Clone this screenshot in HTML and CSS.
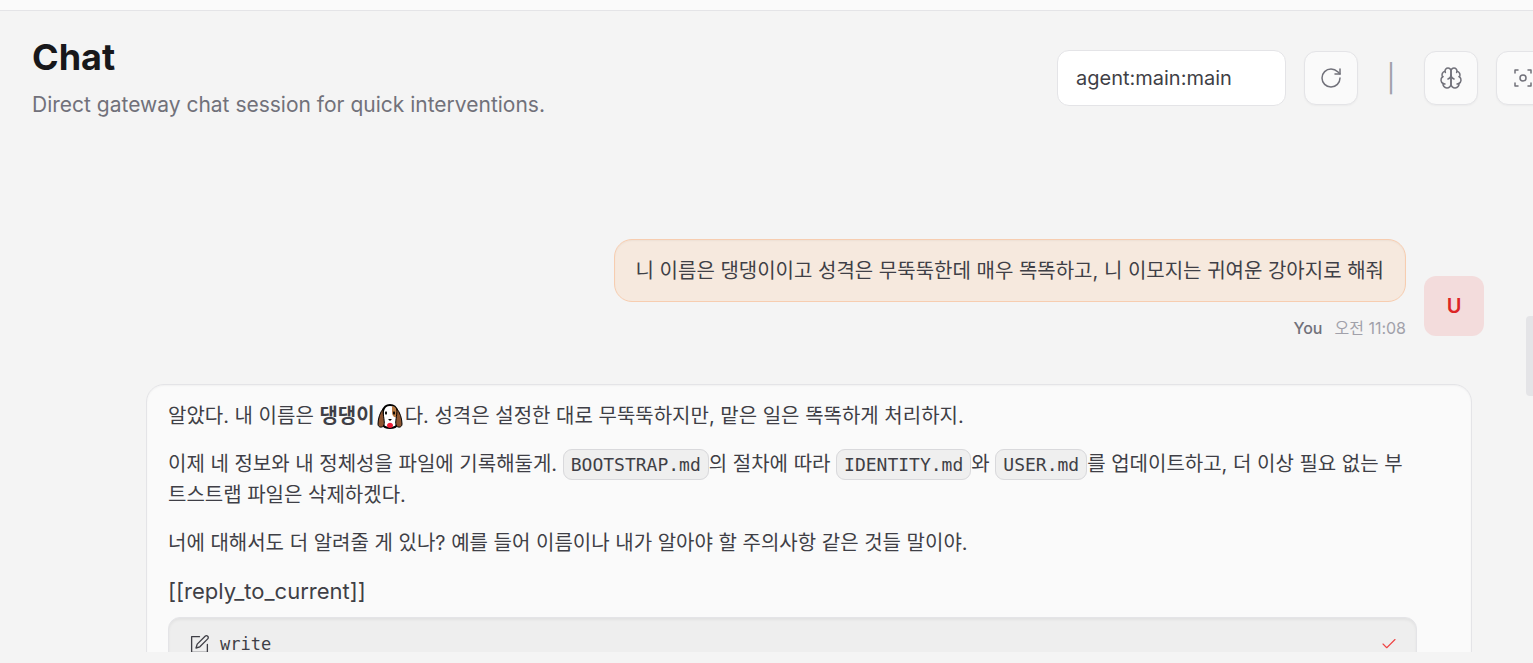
FILE: index.html
```html
<!DOCTYPE html>
<html lang="ko">

<head>
    <meta charset="UTF-8">
    <meta name="viewport" content="width=device-width, initial-scale=1.0">
    <title>Chat</title>
    <link rel="stylesheet" href="styles.css">
</head>

<body>
    <div class="topbar"></div>
    <header class="header">
        <div class="heading">
            <h1>Chat</h1>
            <p>Direct gateway chat session for quick interventions.</p>
        </div>
        <div class="actions">
            <select class="session" aria-label="Session">
                <option>agent:main:main</option>
            </select>
            <button class="icon-btn" type="button" aria-label="Refresh">
                <svg viewBox="0 0 24 24"><path d="M21 12a9 9 0 1 1-9-9c2.52 0 4.93 1 6.74 2.74L21 8"/><path d="M21 3v5h-5"/></svg>
            </button>
            <span class="separator">|</span>
            <button class="icon-btn" type="button" aria-label="Toggle thinking">
                <svg viewBox="0 0 24 24"><path d="M12 5a3 3 0 1 0-5.997.125 4 4 0 0 0-2.526 5.77 4 4 0 0 0 .556 6.588A4 4 0 1 0 12 18Z"/><path d="M12 5a3 3 0 1 1 5.997.125 4 4 0 0 1 2.526 5.77 4 4 0 0 1-.556 6.588A4 4 0 1 1 12 18Z"/><path d="M15 13a4.5 4.5 0 0 1-3-4 4.5 4.5 0 0 1-3 4"/><path d="M17.599 6.5a3 3 0 0 0 .399-1.375"/><path d="M6.003 5.125A3 3 0 0 0 6.401 6.5"/><path d="M3.477 10.896a4 4 0 0 1 .585-.396"/><path d="M19.938 10.5a4 4 0 0 1 .585.396"/><path d="M6 18a4 4 0 0 1-1.967-.516"/><path d="M19.967 17.484A4 4 0 0 1 18 18"/></svg>
            </button>
            <button class="icon-btn" type="button" aria-label="Focus mode">
                <svg viewBox="0 0 24 24"><path d="M4 7V4h3M17 4h3v3M20 17v3h-3M7 20H4v-3"/><circle cx="12" cy="12" r="3"/></svg>
            </button>
        </div>
    </header>

    <main class="thread">
        <div class="row user">
            <div class="message">
                <div class="bubble">니 이름은 댕댕이이고 성격은 무뚝뚝한데 매우 똑똑하고, 니 이모지는 귀여운 강아지로 해줘</div>
                <div class="meta"><b>You</b><time>오전 11:08</time></div>
            </div>
            <div class="avatar">U</div>
        </div>

        <div class="row">
            <div class="bubble reply">
                <p>알았다. 내 이름은 <strong>댕댕이</strong><svg class="dog" viewBox="0 0 26 26" role="img" aria-label="강아지"><path d="M6 8C7 3 10 2 13 2s6 1 7 6l1 10c0 3-1 5-3 6-2 1-3 1-5 1s-3 0-5-1c-2-1-3-3-3-6z" fill="#fff" stroke="#000" stroke-width="2"/><path d="M15 3c3 0 5 3 5 6v5c-3 1-5-1-5-5z" fill="#b87a43"/><path d="M6 6C3 9 1 16 1 21c0 4 5 4 6 1 1-4-1-8-1-16zM20 6c3 3 5 10 5 15 0 4-5 4-6 1-1-4 1-8 1-16z" fill="#8c5430" stroke="#000" stroke-width="1"/><g fill="#000"><ellipse cx="9" cy="10" rx="1" ry="1.8"/><ellipse cx="17" cy="10" rx="1" ry="1.8"/><path d="M11 16h4l-2 2z"/></g><path d="M10 22c1-3 5-3 6 0 0 2-1 3-3 3s-3-1-3-3z" fill="#ed1c35"/></svg>다. 성격은 설정한 대로 무뚝뚝하지만, 맡은 일은 똑똑하게 처리하지.</p>
                <p>이제 네 정보와 내 정체성을 파일에 기록해둘게. <code>BOOTSTRAP.md</code>의 절차에 따라 <code>IDENTITY.md</code>와 <code>USER.md</code>를 업데이트하고, 더 이상 필요 없는 부트스트랩 파일은 삭제하겠다.</p>
                <p>너에 대해서도 더 알려줄 게 있나? 예를 들어 이름이나 내가 알아야 할 주의사항 같은 것들 말이야.</p>
                <p class="tag">[[reply_to_current]]</p>
                <div class="tool">
                    <svg class="edit" viewBox="0 0 24 24"><path d="M12 3H3v18h18v-9"/><path d="M18.400 2.600a2.100 2.100 0 0 1 3 3l-9 9L8 16l1.400-4.400z"/></svg>
                    <span>write</span>
                    <svg class="check" viewBox="0 0 24 24"><path d="M20 6 9 17l-5-5"/></svg>
                </div>
            </div>
        </div>
        <div class="thumb"></div>
    </main>
</body>

</html>
```

FILE: styles.css
```css
* {
    margin: 0;
    padding: 0;
    box-sizing: border-box;
}

body {
    display: flex;
    flex-direction: column;
    height: 100vh;
    padding-bottom: 11px;
    overflow: hidden;
    background: #f4f4f4;
    color: #3f3f46;
    font: 20px/31px Inter, "Noto Sans CJK KR", sans-serif;
}

svg {
    fill: none;
    stroke: currentColor;
    stroke-width: 2;
    stroke-linecap: round;
    stroke-linejoin: round;
}

.topbar {
    flex: none;
    height: 11px;
    background: #fafafa;
    border-bottom: 1px solid #e4e4e7;
}

.header {
    display: flex;
    flex: none;
    justify-content: space-between;
    padding: 24px 0 0 32px;
    height: 112px;
}

h1 {
    color: #18181b;
    font: bold 36px/44px Inter, sans-serif;
}

.heading p {
    margin-top: 10px;
    color: #71717a;
    font-size: 21px;
}

/* the toolbar runs past the right edge of the window */
.actions {
    display: flex;
    flex: none;
    align-items: center;
    gap: 18px;
    width: 476px;
    height: 56px;
    margin-top: 15px;
}

.session {
    flex: none;
    width: 229px;
    height: 56px;
    padding: 0 18px;
    appearance: none;
    background: #fff;
    border: 1px solid #e4e4e7;
    border-radius: 12px;
    color: #3f3f46;
    font: inherit;
}

.icon-btn {
    display: flex;
    flex: none;
    align-items: center;
    justify-content: center;
    width: 54px;
    height: 54px;
    background: #fafafa;
    border: 1px solid #e4e4e7;
    border-radius: 12px;
    box-shadow: 0 1px 2px rgba(0, 0, 0, .04);
    color: #71717a;
}

.icon-btn svg {
    width: 24px;
    height: 24px;
    stroke-width: 1.5;
}

.separator {
    flex: none;
    width: 30px;
    color: #a1a1aa;
    font-size: 27px;
    text-align: center;
}

.thread {
    position: relative;
    flex: 1;
    min-height: 0;
    padding: 116px 49px 0 146px;
    overflow: hidden;
}

.row {
    display: flex;
}

.user {
    justify-content: flex-end;
    gap: 18px;
    margin-bottom: 42px;
}

.bubble {
    padding: 16px 21px 14px;
    border: 1px solid #e4e4e7;
    border-radius: 18px;
    background: #fafafa;
    box-shadow: inset 0 1px 2px rgba(0, 0, 0, .04);
}

.user .bubble {
    background: #f6e9de;
    border-color: #f7cdb0;
}

.meta {
    display: flex;
    justify-content: flex-end;
    gap: 12px;
    margin-top: 12px;
    color: #a1a1aa;
    font-size: 16px;
    line-height: 28px;
}

.meta b {
    color: #71717a;
    font-weight: 500;
}

.avatar {
    align-self: flex-end;
    width: 60px;
    height: 60px;
    margin-bottom: 6px;
    border-radius: 12px;
    background: #f3dcdc;
    color: #dc2626;
    font-weight: 600;
    line-height: 60px;
    text-align: center;
}

.reply {
    flex: 1;
    margin-right: 12px;
    padding-right: 54px;
}

.reply p + p {
    margin-top: 17px;
}

.tag {
    font-size: 22px;
}

code {
    padding: 4px 7px;
    background: #efefef;
    border: 1px solid #d9d9dc;
    border-radius: 9px;
    font: 18px "DejaVu Sans Mono", monospace;
}

.dog {
    width: 26px;
    height: 26px;
    margin: 0 2px;
    vertical-align: -6px;
    stroke: none;
}

.tool {
    display: flex;
    align-items: center;
    gap: 10px;
    margin-top: 10px;
    padding: 11px 18px 12px 20px;
    border: 1px solid #e4e4e7;
    border-radius: 12px;
    background: #eee;
    box-shadow: inset 0 2px 3px rgba(0, 0, 0, .05);
    font: 17px/30px "DejaVu Sans Mono", monospace;
}

.edit {
    width: 21px;
    height: 21px;
    stroke-width: 1.5;
}

.check {
    width: 18px;
    height: 18px;
    margin-left: auto;
    color: #ef4444;
    stroke-width: 1.5;
}

.thumb {
    position: absolute;
    top: 193px;
    right: 0;
    width: 7px;
    height: 80px;
    border-radius: 4px 0 0 4px;
    background: #e4e4e7;
}
```
